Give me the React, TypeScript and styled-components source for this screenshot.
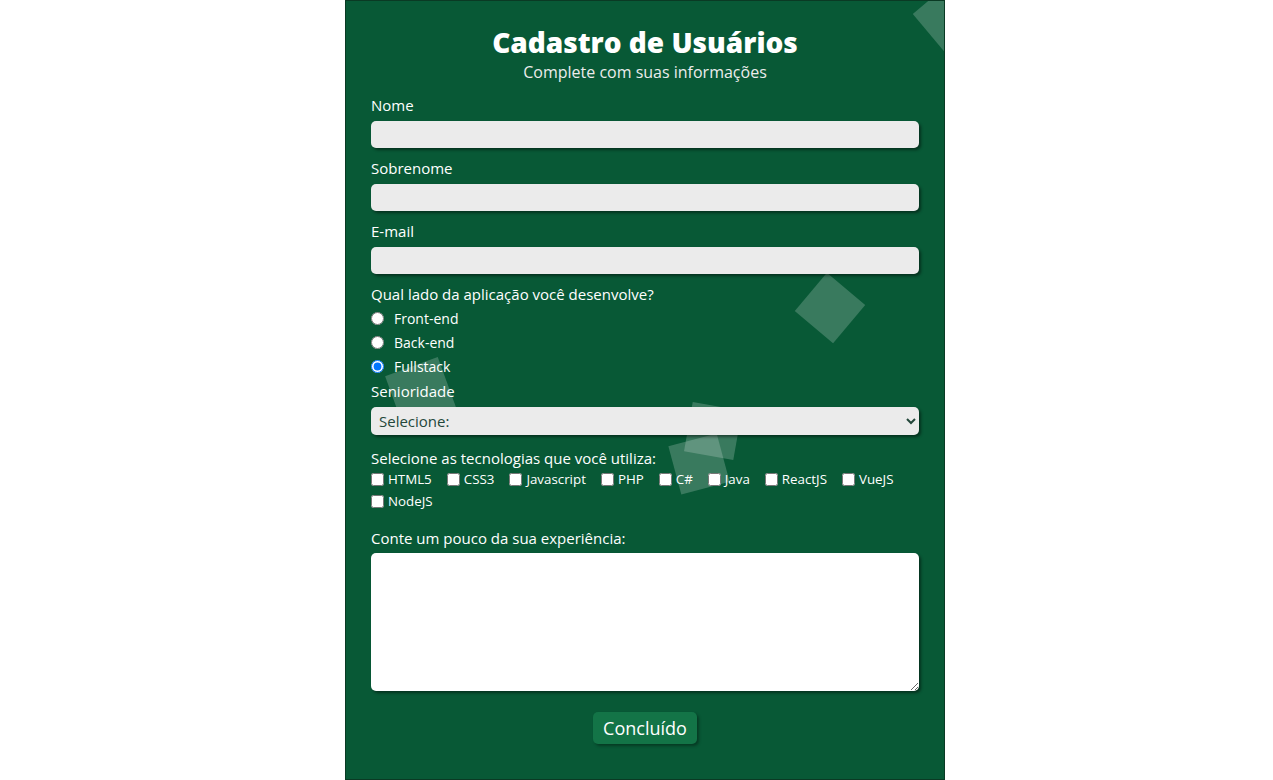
import React from "react";
import styled, { createGlobalStyle } from "styled-components";

const GlobalStyle = createGlobalStyle`
  html, body { margin: 0; padding: 0; background: #ffffff; }
  body { font-family: "Open Sans", "Noto Sans", sans-serif; }
  * { box-sizing: border-box; }
`;

const Page = styled.div`
  display: flex;
  justify-content: center;
  padding-left: 17px;
  min-height: 780px;
`;

const Card = styled.main`
  position: relative;
  width: 600px;
  height: 780px;
  overflow: hidden;
  background: #085936;
  border: 1px solid #0a3a24;
  padding: 22px 25px 0;
  color: #ffffff;
`;

const Square = styled.span<{ $size: number; $rot: number }>`
  position: absolute;
  width: ${(p) => p.$size}px;
  height: ${(p) => p.$size}px;
  background: rgba(255, 255, 255, 0.2);
  transform: rotate(${(p) => p.$rot}deg);
  z-index: 0;
`;

const Content = styled.div`
  position: relative;
  z-index: 1;
  display: flex;
  flex-direction: column;
`;

const Title = styled.h1`
  margin: 0;
  font-size: 28px;
  font-weight: 800;
  line-height: 38px;
  text-align: center;
  color: #ffffff;
`;

const Subtitle = styled.p`
  margin: 0;
  font-size: 16px;
  line-height: 23px;
  text-align: center;
  color: #ececec;
`;

const Form = styled.form`
  display: flex;
  flex-direction: column;
  margin-top: 11px;
`;

const Label = styled.label<{ $gap?: number }>`
  display: block;
  font-size: 15px;
  line-height: 20px;
  margin-top: ${(p) => p.$gap ?? 0}px;
`;

const TextInput = styled.input`
  display: block;
  width: 100%;
  height: 27px;
  margin-top: 6px;
  border: none;
  border-radius: 5px;
  background: #ebebeb;
  box-shadow: 2px 2px 3px rgba(0, 0, 0, 0.45);
  font-family: inherit;
  font-size: 15px;
  padding: 0 8px;
  outline: none;
`;

const RadioGroup = styled.div`
  display: flex;
  flex-direction: column;
  margin-top: 2px;
`;

const RadioRow = styled.label`
  display: flex;
  align-items: center;
  height: 24px;
  font-size: 14px;
`;

const Radio = styled.input`
  width: 13px;
  height: 13px;
  margin: 0 10px 0 0;
`;

const Select = styled.select`
  display: block;
  width: 100%;
  height: 28px;
  margin-top: 6px;
  border: none;
  border-radius: 5px;
  background: #ebebeb;
  box-shadow: 2px 2px 3px rgba(0, 0, 0, 0.45);
  font-family: inherit;
  font-size: 15px;
  color: #23473a;
  padding: 0 4px;
  outline: none;
`;

const CheckGrid = styled.div`
  display: flex;
  flex-wrap: wrap;
`;

const CheckItem = styled.label`
  display: flex;
  align-items: center;
  height: 22px;
  font-size: 13.33px;
  margin-right: 15px;
`;

const Check = styled.input`
  width: 13px;
  height: 13px;
  margin: 0 4px 0 0;
`;

const TextArea = styled.textarea`
  display: block;
  width: 100%;
  height: 138px;
  margin-top: 5px;
  border: none;
  border-radius: 5px;
  background: #ffffff;
  box-shadow: 2px 2px 3px rgba(0, 0, 0, 0.45);
  font-family: inherit;
  font-size: 15px;
  outline: none;
`;

const ButtonRow = styled.div`
  display: flex;
  justify-content: center;
  margin-top: 21px;
`;

const Button = styled.button`
  height: 32px;
  padding: 0 10px;
  border: none;
  border-radius: 5px;
  background: #137447;
  color: #ffffff;
  font-family: inherit;
  font-size: 18px;
  box-shadow: 2px 2px 3px rgba(0, 0, 0, 0.35);
  cursor: pointer;
`;

const techs = ["HTML5", "CSS3", "Javascript", "PHP", "C#", "Java", "ReactJS", "VueJS", "NodeJS"];

const squares = [
  { left: 577, top: -9, size: 50, rot: 50 },
  { left: 459, top: 282, size: 50, rot: 40 },
  { left: 47, top: 364, size: 56, rot: -20 },
  { left: 342, top: 405, size: 50, rot: 10 },
  { left: 328, top: 438, size: 50, rot: -15 },
];

export default function App() {
  return (
    <>
      <GlobalStyle />
      <Page>
        <Card>
          {squares.map((s, i) => (
            <Square key={i} $size={s.size} $rot={s.rot} style={{ left: s.left, top: s.top }} />
          ))}
          <Content>
            <Title>Cadastro de Usuários</Title>
            <Subtitle>Complete com suas informações</Subtitle>
            <Form onSubmit={(e) => e.preventDefault()}>
              <Label htmlFor="nome">Nome</Label>
              <TextInput id="nome" type="text" />
              <Label htmlFor="sobrenome" $gap={10}>Sobrenome</Label>
              <TextInput id="sobrenome" type="text" />
              <Label htmlFor="email" $gap={10}>E-mail</Label>
              <TextInput id="email" type="email" />
              <Label $gap={10}>Qual lado da aplicação você desenvolve?</Label>
              <RadioGroup>
                <RadioRow>
                  <Radio type="radio" name="lado" />
                  Front-end
                </RadioRow>
                <RadioRow>
                  <Radio type="radio" name="lado" />
                  Back-end
                </RadioRow>
                <RadioRow>
                  <Radio type="radio" name="lado" defaultChecked />
                  Fullstack
                </RadioRow>
              </RadioGroup>
              <Label htmlFor="senioridade" $gap={3}>Senioridade</Label>
              <Select id="senioridade" defaultValue="">
                <option value="">Selecione:</option>
                <option value="junior">Júnior</option>
                <option value="pleno">Pleno</option>
                <option value="senior">Sênior</option>
              </Select>
              <Label $gap={13}>Selecione as tecnologias que você utiliza:</Label>
              <CheckGrid>
                {techs.map((t) => (
                  <CheckItem key={t}>
                    <Check type="checkbox" />
                    {t}
                  </CheckItem>
                ))}
              </CheckGrid>
              <Label htmlFor="exp" $gap={16}>Conte um pouco da sua experiência:</Label>
              <TextArea id="exp" />
              <ButtonRow>
                <Button type="submit">Concluído</Button>
              </ButtonRow>
            </Form>
          </Content>
        </Card>
      </Page>
    </>
  );
}
